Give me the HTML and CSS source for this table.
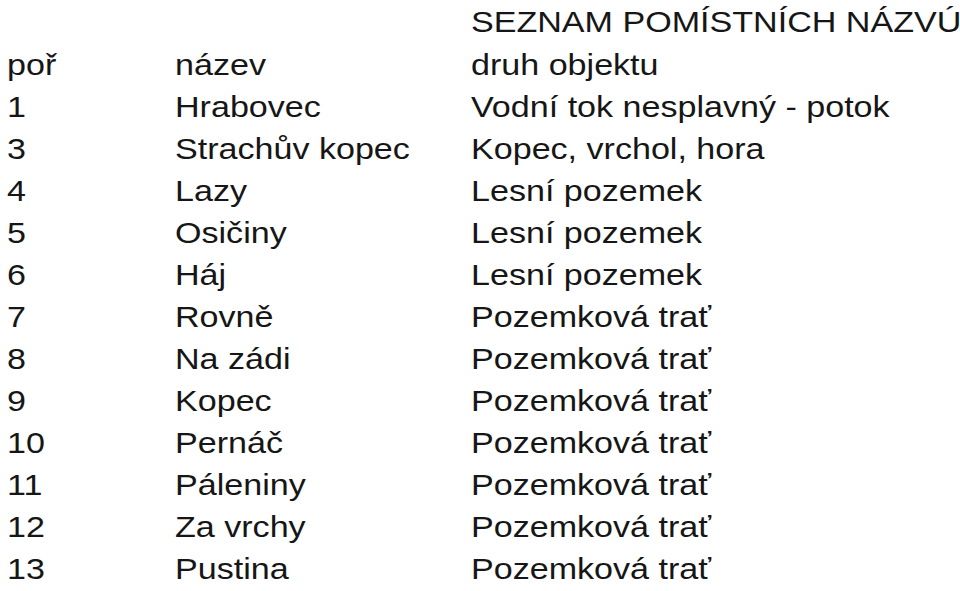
FILE: index.html
```html
<!DOCTYPE html>
<html lang="cs">
<head>
<meta charset="utf-8">
<title>Seznam pomístních názvů</title>
<link rel="stylesheet" href="styles.css">
</head>
<body>
<div class="sheet">
  <div class="title"><span>SEZNAM POMÍSTNÍCH NÁZVÚ</span></div>
  <div class="table">
    <div class="row head"><span>poř</span><span>název</span><span>druh objektu</span></div>
    <div class="row"><span>1</span><span>Hrabovec</span><span>Vodní tok nesplavný - potok</span></div>
    <div class="row"><span>3</span><span>Strachův kopec</span><span>Kopec, vrchol, hora</span></div>
    <div class="row"><span>4</span><span>Lazy</span><span>Lesní pozemek</span></div>
    <div class="row"><span>5</span><span>Osičiny</span><span>Lesní pozemek</span></div>
    <div class="row"><span>6</span><span>Háj</span><span>Lesní pozemek</span></div>
    <div class="row"><span>7</span><span>Rovně</span><span>Pozemková trať</span></div>
    <div class="row"><span>8</span><span>Na zádi</span><span>Pozemková trať</span></div>
    <div class="row"><span>9</span><span>Kopec</span><span>Pozemková trať</span></div>
    <div class="row"><span>10</span><span>Pernáč</span><span>Pozemková trať</span></div>
    <div class="row"><span>11</span><span>Páleniny</span><span>Pozemková trať</span></div>
    <div class="row"><span>12</span><span>Za vrchy</span><span>Pozemková trať</span></div>
    <div class="row"><span>13</span><span>Pustina</span><span>Pozemková trať</span></div>
  </div>
</div>
</body>
</html>
```

FILE: styles.css
```css
html, body {
  margin: 0;
  padding: 0;
  background: #ffffff;
}
body {
  font-family: "Liberation Sans", Arial, sans-serif;
  color: #161616;
  overflow: hidden;
}
.sheet {
  padding-left: 7px;
  width: 953px;
  overflow: hidden;
}
.title {
  padding-left: 464px;
  font-size: 29.5px;
  line-height: 44px;
  white-space: nowrap;
}
.table {
  display: flex;
  flex-direction: column;
}
.row {
  display: grid;
  grid-template-columns: 168px 296px auto;
  font-size: 29.5px;
  line-height: 42px;
  white-space: nowrap;
}
.title span,
.row span {
  display: inline-block;
  transform: scaleX(1.155);
  transform-origin: left center;
}
```
